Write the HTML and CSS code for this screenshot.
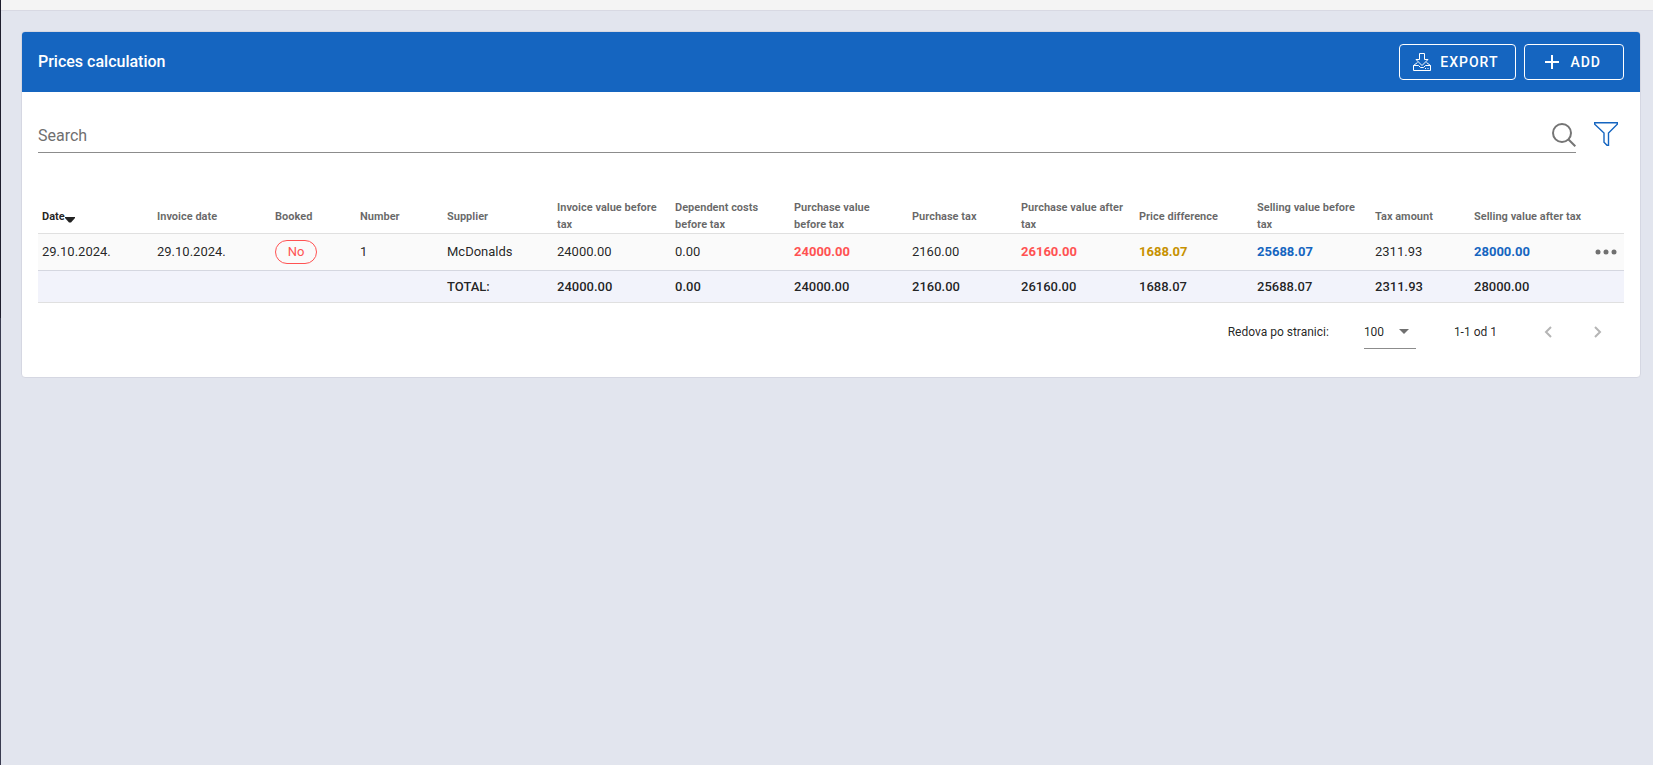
FILE: index.html
```html
<!DOCTYPE html>
<html lang="en">
<head>
<meta charset="utf-8">
<title>Prices calculation</title>
<link rel="stylesheet" href="styles.css">
</head>
<body>
<div class="app">
  <aside class="rail"></aside>
  <div class="content">
    <div class="topbar"></div>
    <main class="card">
      <header class="card-header">
        <h1 class="title">Prices calculation</h1>
        <div class="actions">
          <button class="btn" type="button">
            <svg class="icon-export" viewBox="0 0 18 18" width="18" height="18" aria-hidden="true"><path d="M6.500 .5h5v6h3.500L9 12.500 3 6.500h3.500zM4.500 9.500L.5 12.500v5h17v-5l-4-3M.5 12.500h5l2 2h3l2-2h5M12 15.500h1M14.500 15.500h1"/></svg>
            EXPORT
          </button>
          <button class="btn btn-add" type="button">
            <svg class="icon-plus" viewBox="0 0 14 14" width="14" height="14" aria-hidden="true"><path d="M7 0v14M0 7h14"/></svg>
            ADD
          </button>
        </div>
      </header>
      <div class="card-body">
        <form class="search-row">
          <div class="search-field">
            <input class="search-input" type="search" placeholder="Search" aria-label="Search">
            <svg class="icon-search" viewBox="0 0 24 24" width="24" height="24" aria-hidden="true"><circle cx="10" cy="10" r="9"/><path d="M16.300 16.300l7 7"/></svg>
          </div>
          <button class="filter" type="button" aria-label="Filter">
            <svg class="icon-filter" viewBox="0 0 24 24" width="24" height="24" aria-hidden="true"><path d="M.7.7h22.600v1.500L14.500 11v12.300h-1.500l-3-3V11L.7 2.200z"/></svg>
          </button>
        </form>
        <table class="prices">
          <colgroup>
            <col class="w115"><col class="w118"><col class="w85"><col class="w87"><col class="w110"><col class="w118"><col class="w119"><col class="w118"><col class="w109"><col class="w118"><col class="w118"><col class="w118"><col class="w99"><col class="w118"><col class="w36">
          </colgroup>
          <thead>
            <tr>
              <th class="sorted"><span class="sort">Date<svg class="icon-sort" viewBox="0 0 10 6" width="10" height="6" aria-hidden="true"><path d="M0 0h10v1L6 5.500H4L0 1z"/></svg></span></th>
              <th>Invoice date</th><th>Booked</th><th>Number</th><th>Supplier</th><th>Invoice value before tax</th><th>Dependent costs before tax</th><th>Purchase value before tax</th><th>Purchase tax</th><th>Purchase value after tax</th><th>Price difference</th><th>Selling value before tax</th><th>Tax amount</th><th>Selling value after tax</th><th></th>
            </tr>
          </thead>
          <tbody>
            <tr>
              <td>29.10.2024.</td><td>29.10.2024.</td><td><span class="badge">No</span></td><td>1</td><td>McDonalds</td><td>24000.00</td><td>0.00</td><td class="red">24000.00</td><td>2160.00</td><td class="red">26160.00</td><td class="gold">1688.07</td><td class="blue">25688.07</td><td>2311.93</td><td class="blue">28000.00</td>
              <td class="menu-cell"><button class="menu" type="button" aria-label="Row actions"><svg class="icon-dots" viewBox="0 0 22 6" width="22" height="6" aria-hidden="true"><circle cx="3" cy="3" r="2.500"/><circle cx="11" cy="3" r="2.500"/><circle cx="19" cy="3" r="2.500"/></svg></button></td>
            </tr>
          </tbody>
          <tfoot>
            <tr>
              <td></td><td></td><td></td><td></td><td>TOTAL:</td><td>24000.00</td><td>0.00</td><td>24000.00</td><td>2160.00</td><td>26160.00</td><td>1688.07</td><td>25688.07</td><td>2311.93</td><td>28000.00</td><td></td>
            </tr>
          </tfoot>
        </table>
        <nav class="pager" aria-label="Pagination">
          <label for="rows">Redova po stranici:</label>
          <div class="select">
            <select id="rows" class="rows"><option>100</option></select>
            <svg class="icon-caret" viewBox="0 0 10 5" width="10" height="5" aria-hidden="true"><path d="M0 0h10L5 5z"/></svg>
          </div>
          <span class="range">1-1 od 1</span>
          <button class="page" type="button" aria-label="Previous page" disabled><svg class="icon-page" viewBox="0 0 8 12" width="8" height="12" aria-hidden="true"><path d="M7 1L2 6l5 5"/></svg></button>
          <button class="page" type="button" aria-label="Next page" disabled><svg class="icon-page" viewBox="0 0 8 12" width="8" height="12" aria-hidden="true"><path d="M1 1l5 5-5 5"/></svg></button>
        </nav>
      </div>
    </main>
  </div>
</div>
</body>
</html>
```

FILE: styles.css
```css
* { box-sizing: border-box; }
body {
  margin: 0;
  background: #e2e5ee;
  color: rgba(0, 0, 0, 0.87);
  font-family: Roboto, "Liberation Sans", sans-serif;
  font-size: 13px;
}
button, input, select { font: inherit; color: inherit; }
button { padding: 0; border: 0; background: none; cursor: pointer; }
svg { display: block; flex: none; fill: none; }

.app { display: flex; min-height: 100vh; }
.rail { flex: none; width: 1px; background: linear-gradient(#1e1e2d 318px, #3a3c50 318px); }
.content { flex: 1; min-width: 0; }
.topbar { height: 11px; background: #f4f4f4; border-bottom: 1px solid #d8d9e3; }

.card {
  margin: 20px 12px 20px 20px;
  background: #fff;
  border: 1px solid #d5d7e2;
  border-radius: 4px;
  overflow: hidden;
}
.card-header {
  display: flex;
  align-items: center;
  justify-content: space-between;
  height: 60px;
  padding: 0 16px;
  background: #1565c0;
  color: #fff;
}
.title { margin: 0; font-size: 16px; font-weight: 500; line-height: 24px; }
.actions { display: flex; gap: 8px; }
.btn {
  display: flex;
  align-items: center;
  gap: 9px;
  height: 36px;
  padding: 0 17px 0 13px;
  border: 1px solid #fff;
  border-radius: 4px;
  font-size: 14px;
  font-weight: 500;
  letter-spacing: 1px;
}
.btn-add { gap: 11px; padding: 0 22px 0 20px; }
.icon-export { stroke: #fff; stroke-width: 1; }
.icon-plus { stroke: #fff; stroke-width: 2; }

.card-body { padding: 24px 16px 16px; }
.search-row { display: flex; align-items: center; gap: 18px; margin-bottom: 46px; }
.search-field {
  flex: 1;
  display: flex;
  align-items: center;
  height: 37px;
  padding-top: 2px;
  border-bottom: 1px solid #8c8c8c;
}
.search-input {
  flex: 1;
  min-width: 0;
  height: 32px;
  padding: 0;
  border: 0;
  outline: 0;
  background: none;
  font-size: 16px;
}
.search-input::placeholder { color: #6f6f6f; opacity: 1; }
.icon-search { stroke: #757575; stroke-width: 2; }
.filter { margin: 0 6px 2px 0; }
.icon-filter { stroke: #1565c0; stroke-width: 1.4; }

.prices { width: 100%; table-layout: fixed; border-collapse: separate; border-spacing: 0; }
.w36 { width: 36px; }
.w85 { width: 85px; }
.w87 { width: 87px; }
.w99 { width: 99px; }
.w109 { width: 109px; }
.w110 { width: 110px; }
.w115 { width: 115px; }
.w118 { width: 118px; }
.w119 { width: 119px; }
.prices th {
  height: 35px;
  padding: 0 4px;
  border-bottom: 1px solid #e0e0e0;
  color: rgba(0, 0, 0, 0.6);
  font-size: 11px;
  font-weight: 700;
  line-height: 17px;
  text-align: left;
}
.prices .sorted { color: rgba(0, 0, 0, 0.87); }
.sort { display: flex; align-items: center; }
.icon-sort { margin-top: 8px; fill: #222; }
.prices td { padding: 0 4px; line-height: 20px; }
.prices tbody td { height: 37px; background: #fafafa; border-bottom: 1px solid #d5d7e0; }
.prices tfoot td { height: 32px; background: #f2f3fb; border-bottom: 1px solid #e0e0e0; font-weight: 500; }
.prices .red { color: #ff5252; font-weight: 700; }
.prices .gold { color: #c79100; font-weight: 700; }
.prices .blue { color: #1565c0; font-weight: 700; }
.badge {
  display: block;
  width: 42px;
  height: 24px;
  border: 1px solid #ff5252;
  border-radius: 12px;
  color: #ff5252;
  font-size: 13px;
  line-height: 22px;
  text-align: center;
}
.menu { display: block; margin: 0 auto; }
.icon-dots { fill: #707070; }

.pager { display: flex; align-items: center; justify-content: flex-end; height: 58px; padding-right: 14px; font-size: 12px; }
.select {
  display: flex;
  align-items: center;
  width: 52px;
  height: 34px;
  margin: 0 38px 0 35px;
  padding-right: 7px;
  border-bottom: 1px solid #8c8c8c;
}
.rows { flex: 1; min-width: 0; padding: 0; border: 0; outline: 0; background: none; appearance: none; }
.icon-caret { fill: #707070; }
.range { margin-right: 39px; }
.page { display: grid; place-items: center; width: 24px; height: 24px; }
.page + .page { margin-left: 26px; }
.icon-page { stroke: #b5b5b5; stroke-width: 2; }
```
